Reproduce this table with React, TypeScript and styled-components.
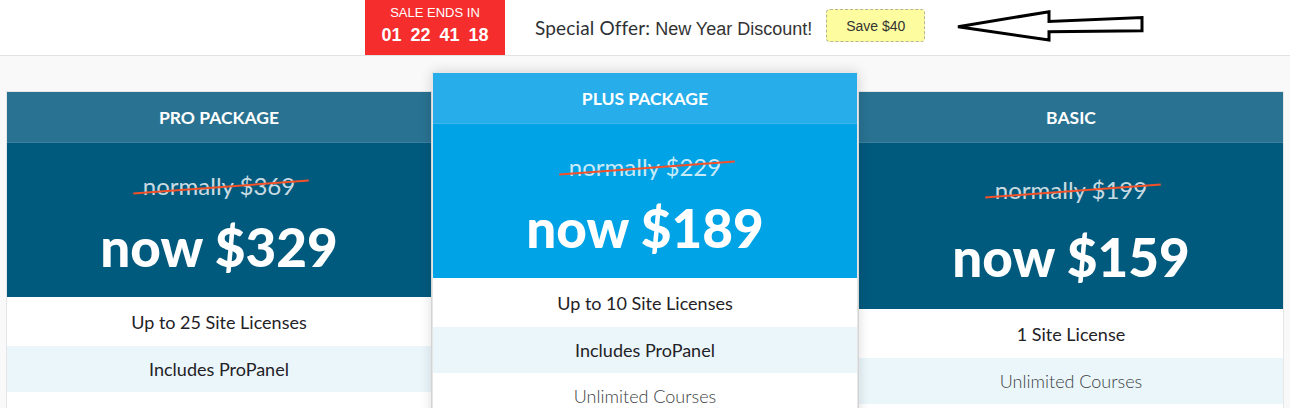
import React from "react";
import styled, { createGlobalStyle, css } from "styled-components";

const GlobalStyle = createGlobalStyle`
  html, body { margin: 0; padding: 0; }
  body {
    background: #f9f9f9;
    font-family: "Lato", "Noto Sans", sans-serif;
    overflow: hidden;
  }
  * { box-sizing: border-box; }
`;

const Page = styled.div`
  min-height: 408px;
`;

const TopBar = styled.header`
  display: flex;
  align-items: center;
  height: 56px;
  padding-left: 365px;
  background: #ffffff;
  border-bottom: 1px solid #e2e2e2;
`;

const SaleBox = styled.div`
  align-self: stretch;
  width: 140px;
  display: flex;
  flex-direction: column;
  align-items: center;
  padding-top: 5px;
  background: #f52d2d;
  color: #ffffff;
  font-family: "Liberation Sans", Arial, sans-serif;
`;

const SaleLabel = styled.div`
  font-size: 13px;
  line-height: 16px;
`;

const Countdown = styled.div`
  display: flex;
  gap: 9px;
  margin-top: 3px;
  font-size: 18px;
  font-weight: 700;
  line-height: 22px;
`;

const OfferText = styled.div`
  margin-left: 30px;
  font-family: "Liberation Sans", Arial, sans-serif;
  font-size: 18px;
  color: #333333;
`;

const OfferLead = styled.span`
  font-family: "Lato", "Noto Sans", sans-serif;
  font-size: 19px;
  letter-spacing: 0.15px;
  font-weight: 400;
  color: #2e3033;
`;

const SaveBadge = styled.div`
  align-self: flex-start;
  margin-top: 9px;
  margin-left: 14px;
  width: 99px;
  height: 33px;
  display: flex;
  align-items: center;
  justify-content: center;
  background: #fdfd9f;
  border: 1px dashed #b3b39a;
  border-radius: 4px;
  font-family: "Liberation Sans", Arial, sans-serif;
  font-size: 14px;
  color: #333333;
`;

const ArrowSvg = styled.svg`
  align-self: flex-start;
  margin-top: 9px;
  margin-left: 29px;
  display: block;
`;

const Cards = styled.main`
  display: grid;
  grid-template-columns: repeat(3, 426px);
  align-items: start;
  padding: 35px 6px 0;
`;

const Card = styled.section<{ $featured?: boolean }>`
  position: relative;
  background: #ffffff;
  border: 1px solid #e6e6e6;
  ${(p) =>
    p.$featured &&
    css`
      z-index: 1;
      margin-top: -19px;
      box-shadow: 0 0 12px rgba(0, 0, 0, 0.16);
    `}
`;

const CardHeader = styled.div<{ $featured?: boolean }>`
  height: 51px;
  display: flex;
  align-items: center;
  justify-content: center;
  background: ${(p) => (p.$featured ? "#27aeea" : "#297291")};
  border-bottom: 1px solid rgba(255, 255, 255, 0.1);
  color: #ffffff;
  font-size: 17.5px;
  font-weight: 700;
  text-transform: uppercase;
`;

const PriceArea = styled.div<{ $featured?: boolean; $top: number; $gap: number; $height: number }>`
  height: ${(p) => p.$height}px;
  display: flex;
  flex-direction: column;
  align-items: center;
  padding-top: ${(p) => p.$top}px;
  gap: ${(p) => p.$gap}px;
  background: ${(p) => (p.$featured ? "#00a3e5" : "#005a7e")};
  color: #ffffff;
`;

const OldPrice = styled.div`
  position: relative;
  font-size: 24px;
  line-height: 28px;
  color: rgba(255, 255, 255, 0.8);
  &::after {
    content: "";
    position: absolute;
    left: -10px;
    right: -14px;
    top: 50%;
    height: 2px;
    background: #f2512a;
    transform: rotate(-4.2deg);
  }
`;

const NewPrice = styled.div`
  font-size: 53px;
  line-height: 54px;
  font-weight: 900;
`;

const FeatureList = styled.ul`
  list-style: none;
  margin: 0;
  padding: 0 0 40px;
`;

const Feature = styled.li<{ $alt?: boolean; $strong?: boolean; $first?: boolean }>`
  height: ${(p) => (p.$first ? 49 : 46)}px;
  display: flex;
  align-items: center;
  justify-content: center;
  background: ${(p) => (p.$alt ? "#ebf6fb" : "#ffffff")};
  font-size: 18px;
  font-weight: ${(p) => (p.$strong ? 400 : 300)};
  color: ${(p) => (p.$strong ? "#1f2226" : "#3a3d42")};
`;

type Plan = {
  name: string;
  old: string;
  now: string;
  featured?: boolean;
  top: number;
  gap: number;
  height: number;
  features: { text: string; strong?: boolean }[];
};

const plans: Plan[] = [
  {
    name: "Pro Package",
    old: "normally $369",
    now: "now $329",
    top: 29,
    gap: 20,
    height: 154,
    features: [
      { text: "Up to 25 Site Licenses", strong: true },
      { text: "Includes ProPanel", strong: true },
    ],
  },
  {
    name: "Plus Package",
    old: "normally $229",
    now: "now $189",
    featured: true,
    top: 29,
    gap: 20,
    height: 154,
    features: [
      { text: "Up to 10 Site Licenses", strong: true },
      { text: "Includes ProPanel", strong: true },
      { text: "Unlimited Courses" },
    ],
  },
  {
    name: "Basic",
    old: "normally $199",
    now: "now $159",
    top: 33,
    gap: 26,
    height: 166,
    features: [
      { text: "1 Site License", strong: true },
      { text: "Unlimited Courses" },
    ],
  },
];

export default function App() {
  return (
    <Page>
      <GlobalStyle />
      <TopBar>
        <SaleBox>
          <SaleLabel>SALE ENDS IN</SaleLabel>
          <Countdown>
            <span>01</span>
            <span>22</span>
            <span>41</span>
            <span>18</span>
          </Countdown>
        </SaleBox>
        <OfferText>
          <OfferLead>Special Offer:</OfferLead> New Year Discount!
        </OfferText>
        <SaveBadge>Save $40</SaveBadge>
        <ArrowSvg width="196" height="36" viewBox="0 0 196 36">
          <polygon
            points="4,17.7 95,2.7 95,12.5 188,8.5 188,21.7 95,22.7 95,31"
            fill="#ffffff"
            stroke="#000000"
            strokeWidth="3"
            strokeLinejoin="miter"
          />
        </ArrowSvg>
      </TopBar>
      <Cards>
        {plans.map((p) => (
          <Card key={p.name} $featured={p.featured}>
            <CardHeader $featured={p.featured}>{p.name}</CardHeader>
            <PriceArea $featured={p.featured} $top={p.top} $gap={p.gap} $height={p.height}>
              <OldPrice>{p.old}</OldPrice>
              <NewPrice>{p.now}</NewPrice>
            </PriceArea>
            <FeatureList>
              {p.features.map((f, i) => (
                <Feature key={f.text} $alt={i % 2 === 1} $strong={f.strong} $first={i === 0}>
                  {f.text}
                </Feature>
              ))}
            </FeatureList>
          </Card>
        ))}
      </Cards>
    </Page>
  );
}
